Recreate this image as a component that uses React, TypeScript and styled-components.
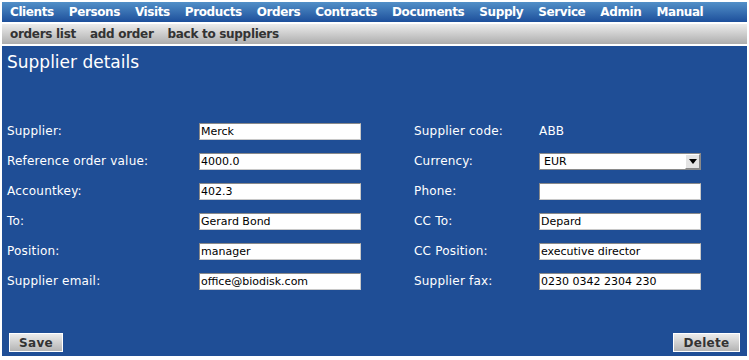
import React from "react";
import styled, { createGlobalStyle } from "styled-components";

const Global = createGlobalStyle`
  html, body { margin: 0; padding: 0; background: #fff; }
  body { margin: 2px; font-family: "DejaVu Sans", Verdana, sans-serif; }
`;

const Page = styled.div`
  display: flex;
  flex-direction: column;
  gap: 2px;
  width: 745px;
`;

const MenuBar = styled.nav`
  height: 20px;
  display: flex;
  align-items: center;
  gap: 15px;
  padding-left: 8px;
  background: linear-gradient(#5290c8, #1d4f9b);
`;

const MenuItem = styled.span`
  color: #fff;
  font-weight: bold;
  font-size: 12px;
  letter-spacing: -0.4px;
`;

const SubBar = styled.nav`
  height: 20px;
  display: flex;
  align-items: center;
  gap: 14px;
  padding-left: 8px;
  background: linear-gradient(#ececec, #adadad);
`;

const SubItem = styled.span`
  color: #333;
  font-weight: bold;
  font-size: 12px;
  letter-spacing: -0.3px;
`;

const Panel = styled.main`
  height: 310px;
  background: #1f4e96;
  display: flex;
  flex-direction: column;
  box-sizing: border-box;
  padding: 6px 5px 4px 5px;
`;

const Title = styled.h1`
  margin: 0;
  color: #fff;
  font-weight: normal;
  font-size: 17px;
  line-height: 20px;
`;

const Form = styled.div`
  margin-top: 44px;
  display: grid;
  grid-template-columns: 192px 162px 53px 125px 162px;
  grid-auto-rows: 30px;
  align-items: center;
`;

const Label = styled.span<{ $col: number }>`
  grid-column: ${(p) => p.$col};
  color: #fff;
  font-size: 12px;
  letter-spacing: 0.2px;
`;

const Input = styled.div<{ $col: number }>`
  grid-column: ${(p) => p.$col};
  height: 17px;
  box-sizing: border-box;
  background: #fff;
  border: 1px solid #8a8a8a;
  border-right-color: #c8c8c8;
  border-bottom-color: #c8c8c8;
  color: #000;
  font-size: 11px;
  line-height: 15px;
  padding-left: 1px;
  white-space: nowrap;
  overflow: hidden;
`;

const Value = styled.span<{ $col: number }>`
  grid-column: ${(p) => p.$col};
  color: #fff;
  font-size: 12px;
  letter-spacing: 0.2px;
`;

const Select = styled.div<{ $col: number }>`
  grid-column: ${(p) => p.$col};
  height: 17px;
  box-sizing: border-box;
  background: #fff;
  border: 1px solid #8a8a8a;
  display: flex;
  align-items: stretch;
  font-size: 11px;
  color: #000;
`;

const SelectText = styled.span`
  flex: 1;
  padding-left: 4px;
  line-height: 15px;
`;

const Arrow = styled.span`
  width: 15px;
  background: #e4e4e4;
  border-left: 1px solid #fff;
  border-top: 1px solid #fff;
  border-right: 1px solid #888;
  border-bottom: 1px solid #888;
  box-sizing: border-box;
  display: flex;
  align-items: center;
  justify-content: center;
`;

const Footer = styled.div`
  margin-top: auto;
  display: flex;
  justify-content: space-between;
  padding: 0 2px 0 2px;
`;

const Button = styled.button<{ $w: number }>`
  width: ${(p) => p.$w}px;
  height: 19px;
  padding: 0;
  border: 1px solid #fff;
  background: linear-gradient(#ececec, #b4b4b4);
  color: #333;
  font-family: "DejaVu Sans", Verdana, sans-serif;
  font-weight: bold;
  font-size: 12px;
  letter-spacing: 0.3px;
`;

const menu = ["Clients", "Persons", "Visits", "Products", "Orders", "Contracts", "Documents", "Supply", "Service", "Admin", "Manual"];
const sub = ["orders list", "add order", "back to suppliers"];

type Row = { l: string; v: string; r: string; rv: string; rKind: "text" | "select" | "input" };
const rows: Row[] = [
  { l: "Supplier:", v: "Merck", r: "Supplier code:", rv: "ABB", rKind: "text" },
  { l: "Reference order value:", v: "4000.0", r: "Currency:", rv: "EUR", rKind: "select" },
  { l: "Accountkey:", v: "402.3", r: "Phone:", rv: "", rKind: "input" },
  { l: "To:", v: "Gerard Bond", r: "CC To:", rv: "Depard", rKind: "input" },
  { l: "Position:", v: "manager", r: "CC Position:", rv: "executive director", rKind: "input" },
  { l: "Supplier email:", v: "office@biodisk.com", r: "Supplier fax:", rv: "0230 0342 2304 230", rKind: "input" },
];

export default function App() {
  return (
    <>
      <Global />
      <Page>
        <MenuBar>
          {menu.map((m) => (
            <MenuItem key={m}>{m}</MenuItem>
          ))}
        </MenuBar>
        <SubBar>
          {sub.map((m) => (
            <SubItem key={m}>{m}</SubItem>
          ))}
        </SubBar>
        <Panel>
          <Title>Supplier details</Title>
          <Form>
            {rows.map((r) => (
              <React.Fragment key={r.l}>
                <Label $col={1}>{r.l}</Label>
                <Input $col={2}>{r.v}</Input>
                <Label $col={4}>{r.r}</Label>
                {r.rKind === "text" && <Value $col={5}>{r.rv}</Value>}
                {r.rKind === "input" && <Input $col={5}>{r.rv}</Input>}
                {r.rKind === "select" && (
                  <Select $col={5}>
                    <SelectText>{r.rv}</SelectText>
                    <Arrow>
                      <svg width="8" height="5" viewBox="0 0 8 5">
                        <path d="M0 0 H8 L4 5 Z" fill="#000" />
                      </svg>
                    </Arrow>
                  </Select>
                )}
              </React.Fragment>
            ))}
          </Form>
          <Footer>
            <Button $w={54}>Save</Button>
            <Button $w={67}>Delete</Button>
          </Footer>
        </Panel>
      </Page>
    </>
  );
}
